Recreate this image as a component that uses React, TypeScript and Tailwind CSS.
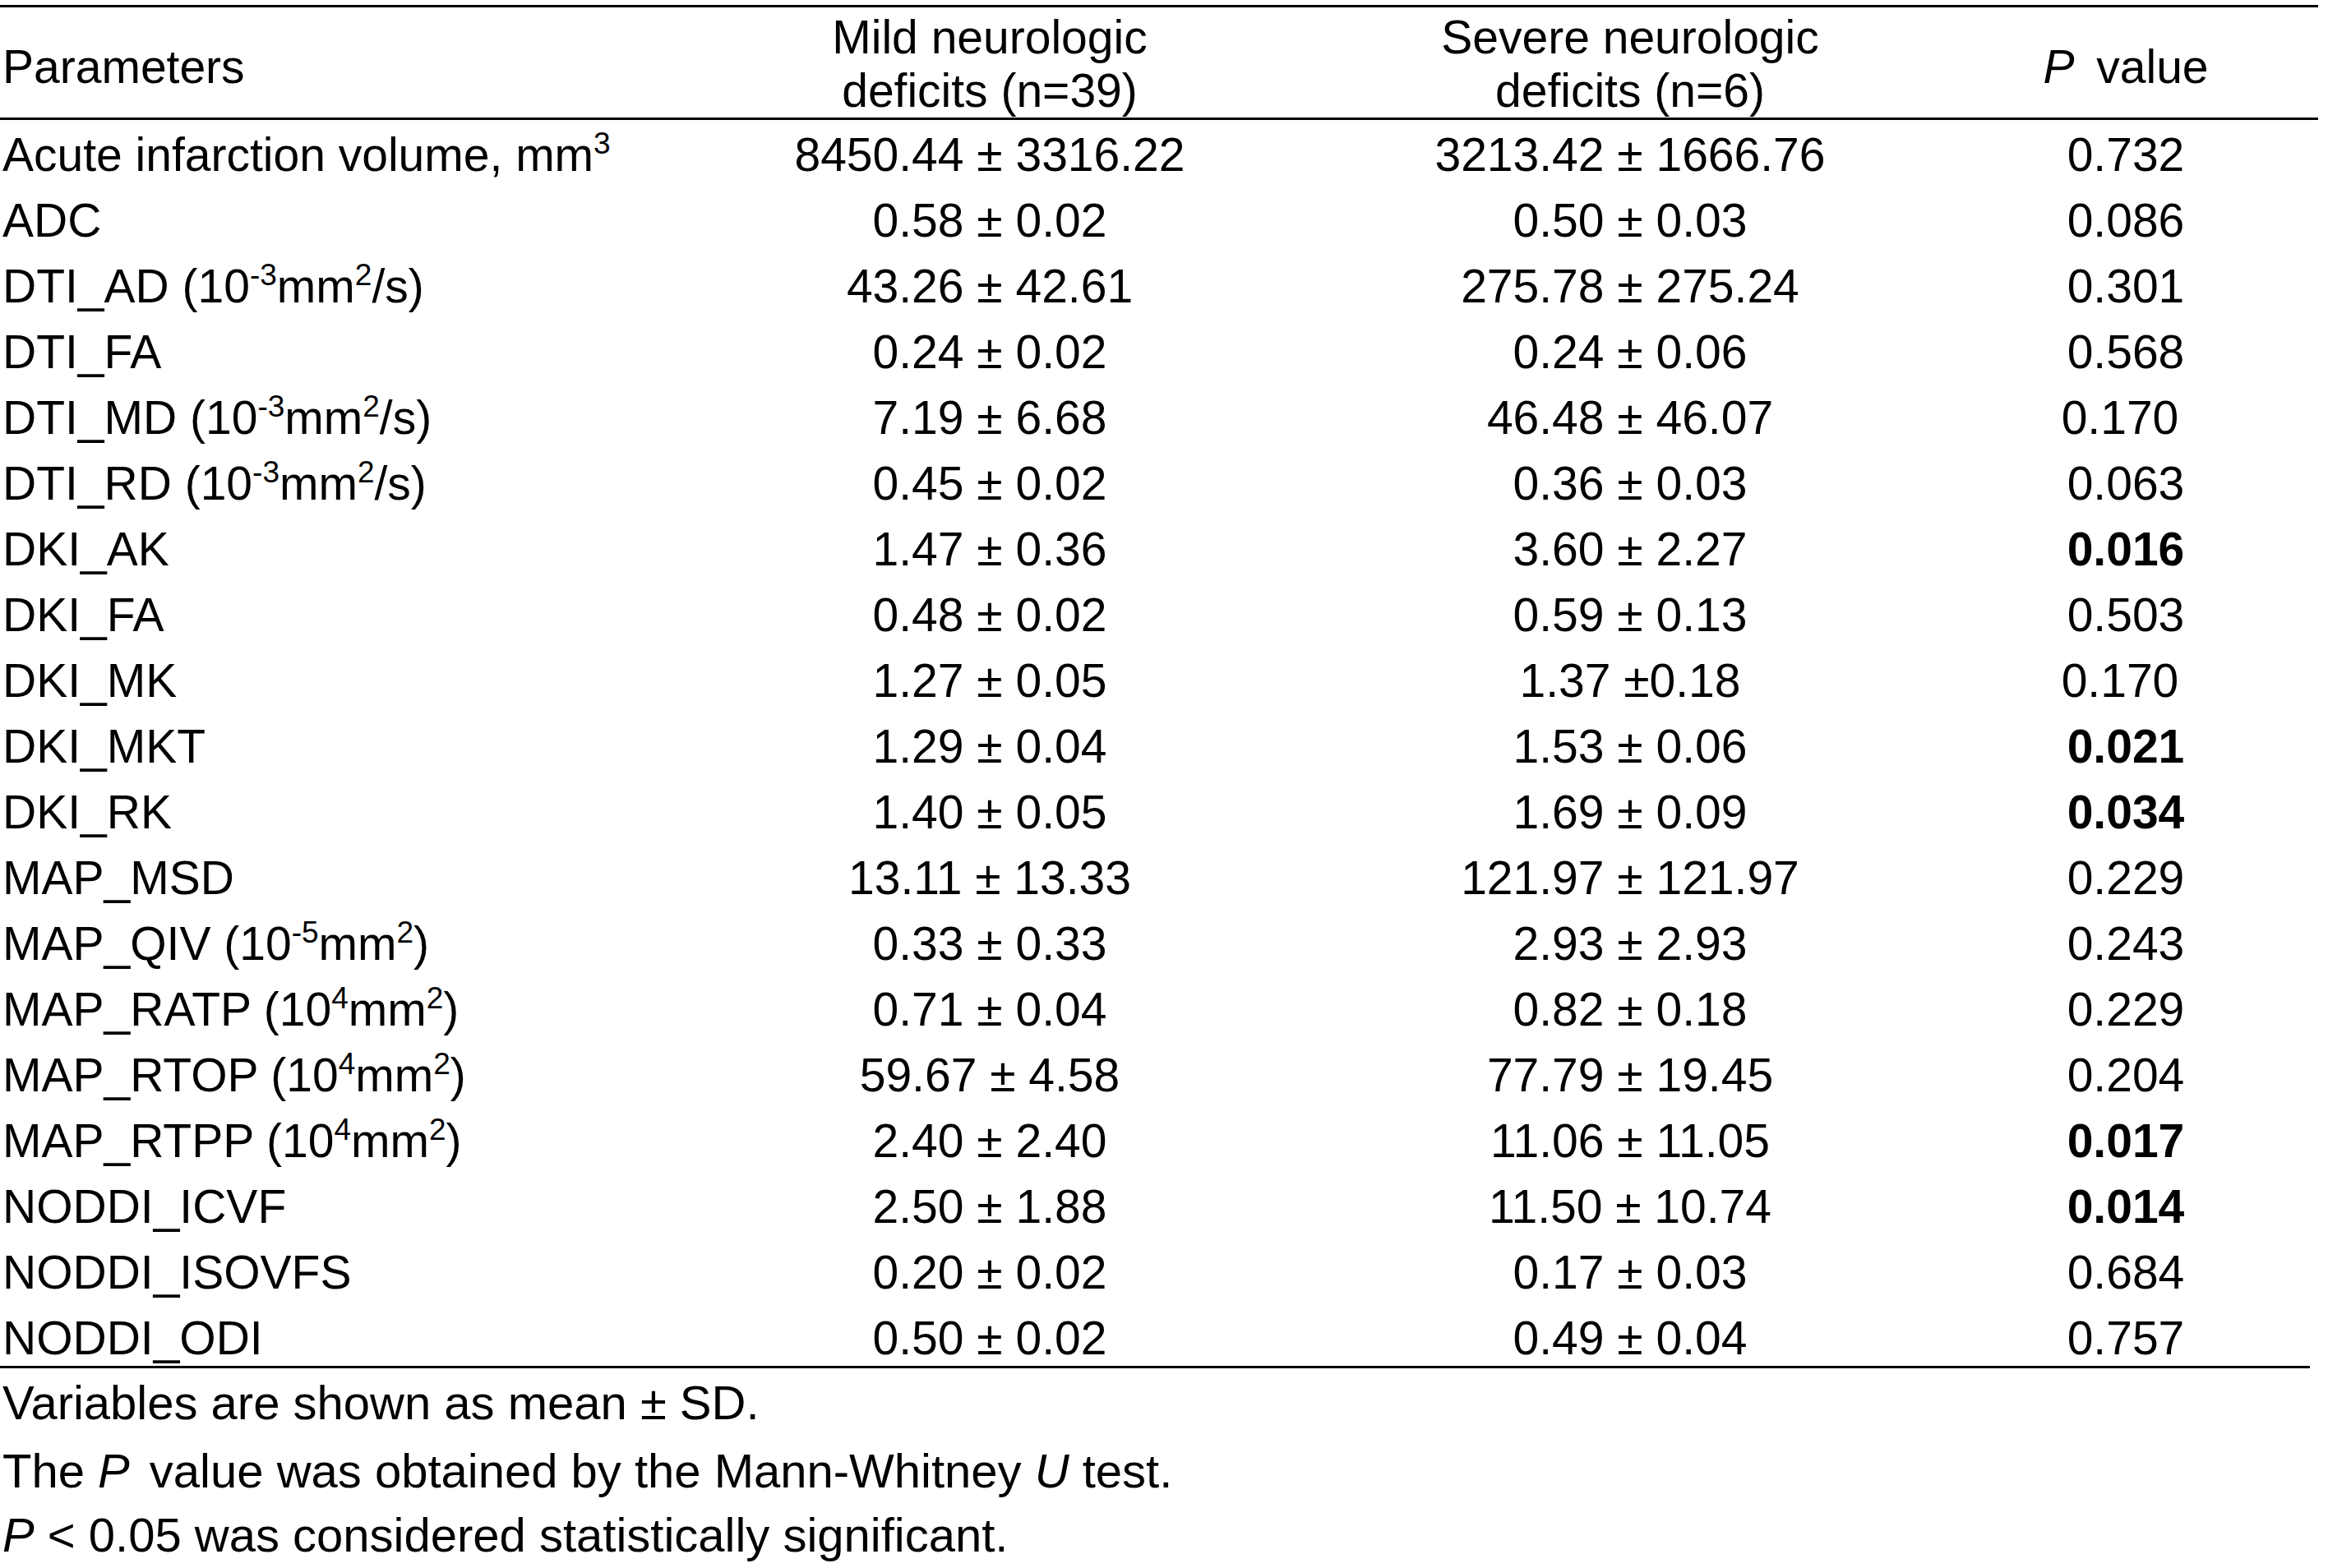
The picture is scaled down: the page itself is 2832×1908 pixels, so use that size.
import type { ReactNode } from "react";

function Sup({ children }: { children: ReactNode }) {
  return <sup className="top-[-21px] text-[37px]">{children}</sup>;
}

type Row = {
  label: ReactNode;
  mild: string;
  severe: string;
  p: string;
  bold?: boolean;
  nudge?: boolean;
};

const rows: Row[] = [
  {
    label: (
      <>
        Acute infarction volume, mm<Sup>3</Sup>
      </>
    ),
    mild: "8450.44 ± 3316.22",
    severe: "3213.42 ± 1666.76",
    p: "0.732",
  },
  { label: "ADC", mild: "0.58 ± 0.02", severe: "0.50 ± 0.03", p: "0.086" },
  {
    label: (
      <>
        DTI_AD (10<Sup>-3</Sup>mm<Sup>2</Sup>/s)
      </>
    ),
    mild: "43.26 ± 42.61",
    severe: "275.78 ± 275.24",
    p: "0.301",
  },
  { label: "DTI_FA", mild: "0.24 ± 0.02", severe: "0.24 ± 0.06", p: "0.568" },
  {
    label: (
      <>
        DTI_MD (10<Sup>-3</Sup>mm<Sup>2</Sup>/s)
      </>
    ),
    mild: "7.19 ± 6.68",
    severe: "46.48 ± 46.07",
    p: "0.170",
    nudge: true,
  },
  {
    label: (
      <>
        DTI_RD (10<Sup>-3</Sup>mm<Sup>2</Sup>/s)
      </>
    ),
    mild: "0.45 ± 0.02",
    severe: "0.36 ± 0.03",
    p: "0.063",
  },
  { label: "DKI_AK", mild: "1.47 ± 0.36", severe: "3.60 ± 2.27", p: "0.016", bold: true },
  { label: "DKI_FA", mild: "0.48 ± 0.02", severe: "0.59 ± 0.13", p: "0.503" },
  { label: "DKI_MK", mild: "1.27 ± 0.05", severe: "1.37 ±0.18", p: "0.170", nudge: true },
  { label: "DKI_MKT", mild: "1.29 ± 0.04", severe: "1.53 ± 0.06", p: "0.021", bold: true },
  { label: "DKI_RK", mild: "1.40 ± 0.05", severe: "1.69 ± 0.09", p: "0.034", bold: true },
  { label: "MAP_MSD", mild: "13.11 ± 13.33", severe: "121.97 ± 121.97", p: "0.229" },
  {
    label: (
      <>
        MAP_QIV (10<Sup>-5</Sup>mm<Sup>2</Sup>)
      </>
    ),
    mild: "0.33 ± 0.33",
    severe: "2.93 ± 2.93",
    p: "0.243",
  },
  {
    label: (
      <>
        MAP_RATP (10<Sup>4</Sup>mm<Sup>2</Sup>)
      </>
    ),
    mild: "0.71 ± 0.04",
    severe: "0.82 ± 0.18",
    p: "0.229",
  },
  {
    label: (
      <>
        MAP_RTOP (10<Sup>4</Sup>mm<Sup>2</Sup>)
      </>
    ),
    mild: "59.67 ± 4.58",
    severe: "77.79 ± 19.45",
    p: "0.204",
  },
  {
    label: (
      <>
        MAP_RTPP (10<Sup>4</Sup>mm<Sup>2</Sup>)
      </>
    ),
    mild: "2.40 ± 2.40",
    severe: "11.06 ± 11.05",
    p: "0.017",
    bold: true,
  },
  { label: "NODDI_ICVF", mild: "2.50 ± 1.88", severe: "11.50 ± 10.74", p: "0.014", bold: true },
  { label: "NODDI_ISOVFS", mild: "0.20 ± 0.02", severe: "0.17 ± 0.03", p: "0.684" },
  { label: "NODDI_ODI", mild: "0.50 ± 0.02", severe: "0.49 ± 0.04", p: "0.757" },
];

export default function App() {
  return (
    <div className="min-h-screen w-[2832px] bg-white pt-[6px] font-['Liberation_Sans',Arial,sans-serif] text-[57px] text-black">
      <div className="w-[2820px]">
        {/* header */}
        <div className="grid h-[140px] grid-cols-[794px_820px_738px_468px] border-t-[3px] border-b-[3px] border-black">
          <div className="pt-[40px] pl-[3px] leading-[65px]">Parameters</div>
          <div className="pt-[4px] text-center leading-[65px]">
            Mild neurologic
            <br />
            deficits (n=39)
          </div>
          <div className="pt-[4px] text-center leading-[65px]">
            Severe neurologic
            <br />
            deficits (n=6)
          </div>
          <div className="pt-[40px] text-center leading-[65px]">
            <i className="mr-[11px]">P</i> value
          </div>
        </div>

        {/* body */}
        <div className="pt-[2px]">
          {rows.map((r, i) => (
            <div
              key={i}
              className={
                i === rows.length - 1
                  ? "grid h-[74px] grid-cols-[794px_820px_738px_468px] leading-[80px] whitespace-nowrap"
                  : "grid h-[80px] grid-cols-[794px_820px_738px_468px] leading-[80px] whitespace-nowrap"
              }
            >
              <div className="pl-[3px]">{r.label}</div>
              <div className="text-center">{r.mild}</div>
              <div className="text-center">{r.severe}</div>
              <div
                className={
                  (r.bold ? "font-bold " : "") +
                  (r.nudge ? "pr-[14px] text-center" : "text-center")
                }
              >
                {r.p}
              </div>
            </div>
          ))}
        </div>
        <div className="h-[3px] w-[2810px] bg-black" />

        {/* notes */}
        <div className="pl-[3px] text-[58px] leading-[80px] whitespace-nowrap">
          <div className="mt-[2px]">Variables are shown as mean ± SD.</div>
          <div className="mt-[3px]">
            The <i className="mr-[8px]">P</i> value was obtained by the Mann-Whitney <i>U</i> test.
          </div>
          <div className="-mt-[2px]">
            <i>P</i> &lt; 0.05 was considered statistically significant.
          </div>
        </div>
      </div>
    </div>
  );
}
